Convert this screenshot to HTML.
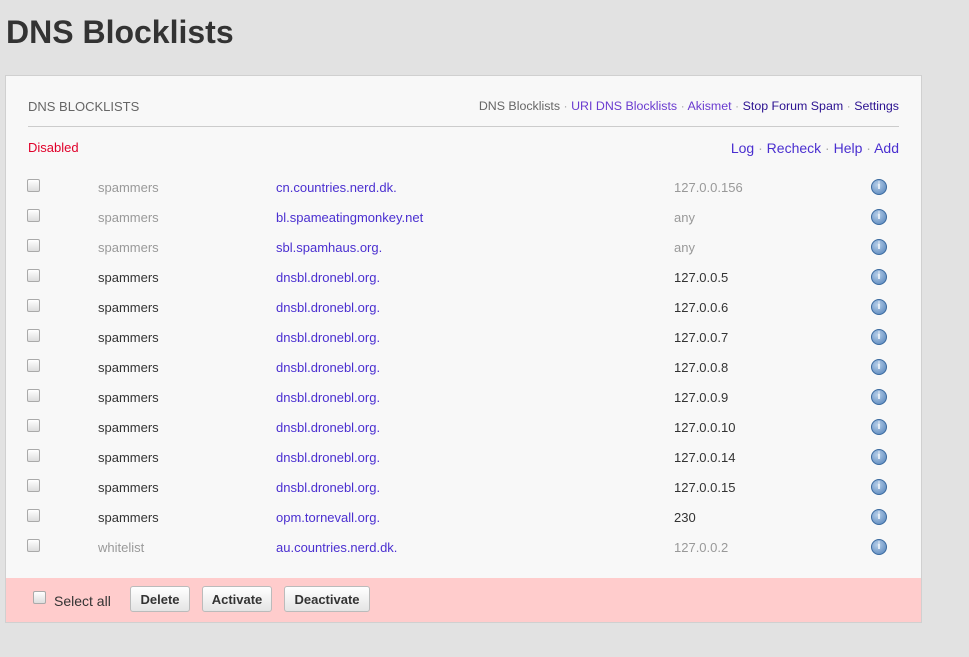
<!DOCTYPE html>
<html><head><style>
body{margin:0;width:969px;height:657px;background:#e2e2e2;font-family:"Liberation Sans",Arial,sans-serif;position:relative;overflow:hidden}
h1{position:absolute;left:6px;top:14px;margin:0;font-size:32px;font-weight:bold;color:#333}
.panel{position:absolute;left:5px;top:75px;width:915px;height:546px;background:#f8f8f8;border:1px solid #d0d0d0}
.abs{position:absolute;font-size:13px;white-space:nowrap}
.hr{position:absolute;left:22px;top:50px;width:871px;height:1px;background:#ccc}
a{color:#4a2fd0;text-decoration:none}
.sep{color:#aaa}
.cb{position:absolute;width:11px;height:11px;border:1px solid #aaa;border-radius:2px;background:linear-gradient(#fff,#ddd)}
.ic{position:absolute;width:14px;height:14px;border-radius:50%;background:radial-gradient(circle at 40% 35%,#b8d0ea,#4f7fb8);border:1px solid #3a6aa0;color:#fff;font-size:10px;font-weight:bold;text-align:center;line-height:14px}
.foot{position:absolute;left:0;top:502px;width:915px;height:44px;background:#ffcccc}
.btn{position:absolute;top:8px;height:26px;border:1px solid #bbb;border-radius:3px;background:linear-gradient(#fff,#e4e4e4);font-size:13px;font-weight:bold;color:#333;text-align:center;line-height:26px;box-sizing:border-box}
</style></head><body>
<h1>DNS Blocklists</h1>
<div class="panel">
<div class="abs" style="left:22px;top:23px;color:#666">DNS BLOCKLISTS</div>
<div class="abs" style="right:22px;top:23px;color:#666;font-size:12.4px">DNS Blocklists <span class="sep">·</span> <a href="#" style="color:#6a3bd0">URI DNS Blocklists</a> <span class="sep">·</span> <a href="#" style="color:#6a3bd0">Akismet</a> <span class="sep">·</span> <a href="#" style="color:#2a1090">Stop Forum Spam</a> <span class="sep">·</span> <a href="#" style="color:#2a1090">Settings</a></div>
<div class="hr"></div>
<div class="abs" style="left:22px;top:64px;color:#e0002a">Disabled</div>
<div class="abs" style="right:22px;top:64px;font-size:14px"><a href="#">Log</a> <span class="sep">·</span> <a href="#">Recheck</a> <span class="sep">·</span> <a href="#">Help</a> <span class="sep">·</span> <a href="#">Add</a></div>
<div id="rows"></div>
<div class="foot">
<div class="cb" style="left:27px;top:13px"></div>
<div class="abs" style="left:48px;top:15px;color:#333;font-size:14px">Select all</div>
<div class="btn" style="left:124px;width:60px">Delete</div>
<div class="btn" style="left:196px;width:70px">Activate</div>
<div class="btn" style="left:278px;width:86px">Deactivate</div>
</div>
</div>
<script>
var d=[["spammers","cn.countries.nerd.dk.","127.0.0.156",1],["spammers","bl.spameatingmonkey.net","any",1],["spammers","sbl.spamhaus.org.","any",1],["spammers","dnsbl.dronebl.org.","127.0.0.5"],["spammers","dnsbl.dronebl.org.","127.0.0.6"],["spammers","dnsbl.dronebl.org.","127.0.0.7"],["spammers","dnsbl.dronebl.org.","127.0.0.8"],["spammers","dnsbl.dronebl.org.","127.0.0.9"],["spammers","dnsbl.dronebl.org.","127.0.0.10"],["spammers","dnsbl.dronebl.org.","127.0.0.14"],["spammers","dnsbl.dronebl.org.","127.0.0.15"],["spammers","opm.tornevall.org.","230"],["whitelist","au.countries.nerd.dk.","127.0.0.2",1]];
var h="";d.forEach(function(r,i){var y=104+i*30,c=r[3]?"#999":"#333";
h+='<div class="cb" style="left:21px;top:'+(y-1)+'px"></div><div class="abs" style="left:92px;top:'+y+'px;color:'+c+'">'+r[0]+'</div><div class="abs" style="left:270px;top:'+y+'px"><a href="#">'+r[1]+'</a></div><div class="abs" style="left:668px;top:'+y+'px;color:'+c+'">'+r[2]+'</div><div class="ic" style="left:865px;top:'+(y-1)+'px">i</div>';});
document.getElementById("rows").innerHTML=h;
</script>
</body></html>
